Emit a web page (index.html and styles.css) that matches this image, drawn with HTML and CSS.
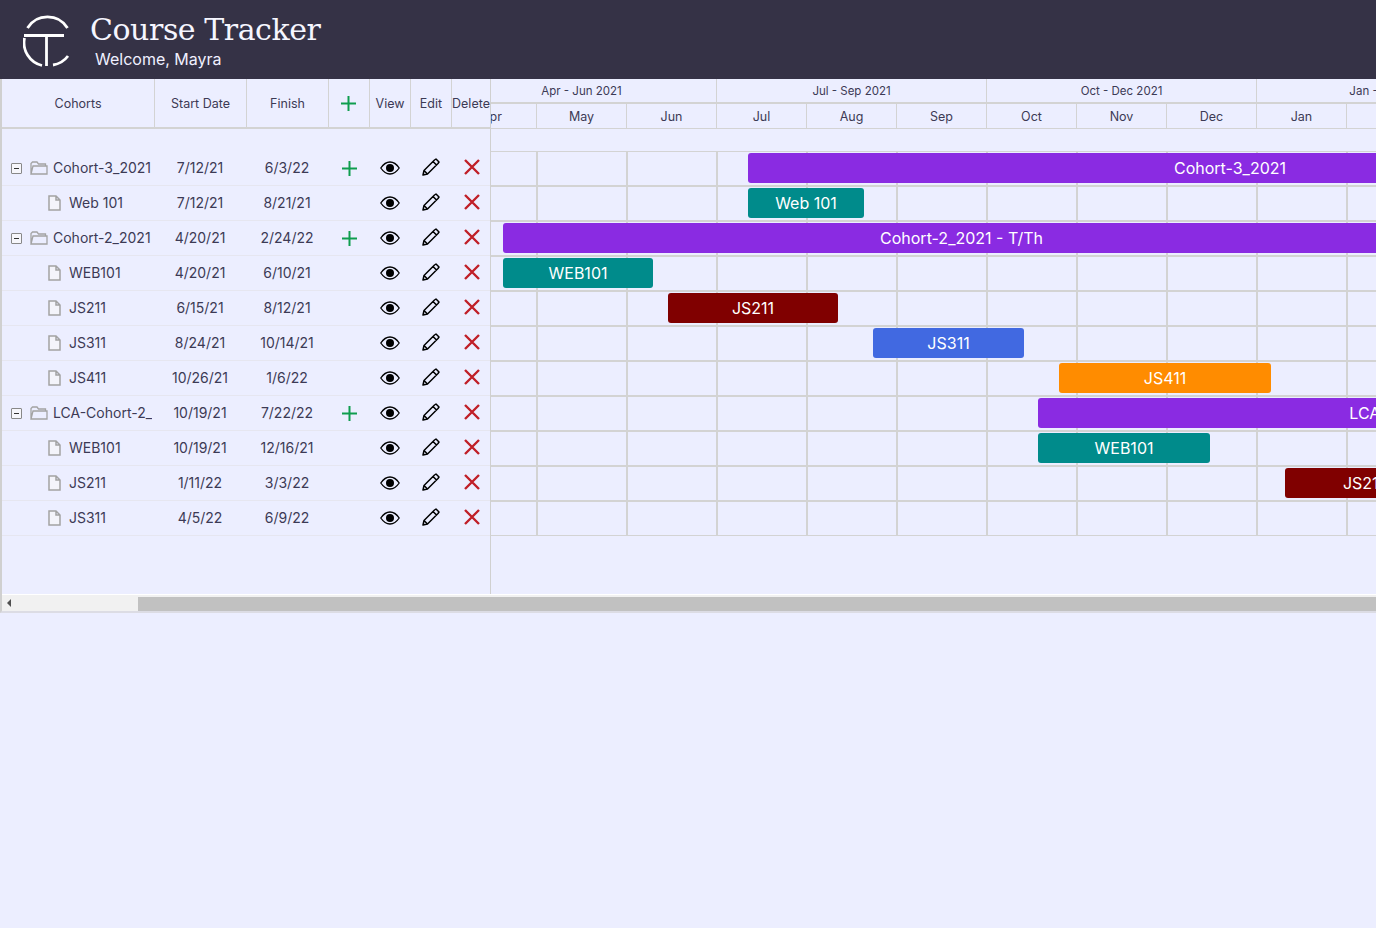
FILE: index.html

```html
<!DOCTYPE HTML>
<html>
<head>
<meta charset="utf-8">
<title>Course Tracker</title>
<link rel="stylesheet" href="styles.css">
</head>

<body>
<svg class="defs" width="0" height="0">
	<symbol id="i-plus" viewBox="0 0 15 15"><path d="M7.500 0V15M0 7.500H15" fill="none" stroke="#0f9d4f" stroke-width="2"/></symbol>
	<symbol id="i-eye" viewBox="0 0 20 14"><path d="M0.8 7C3.5 3 6.5 1 10 1S16.500 3 19.200 7C16.500 11 13.500 13 10 13S3.500 11 0.800 7Z" fill="none" stroke="#000" stroke-width="1.300"/><circle cx="10" cy="7" r="4" fill="#000"/></symbol>
	<symbol id="i-pen" viewBox="0 0 18 18"><path d="M1 17L2 12.500L12.500 2L14 1L17 4L16 5.500L5.500 16ZM2 12.500L5.500 16M11 3.500L14.500 7" fill="none" stroke="#000" stroke-width="1.500" stroke-linejoin="round"/></symbol>
	<symbol id="i-del" viewBox="0 0 16 16"><path d="M1 1L15 15M15 1L1 15" fill="none" stroke="#c01f28" stroke-width="2.400"/></symbol>
	<symbol id="i-file" viewBox="0 0 13 16"><path d="M1 1H8L12 5V15H1ZM8 1V5H12" fill="#f4f4fa" stroke="#a3a3a3" stroke-width="1.500"/></symbol>
	<symbol id="i-folder" viewBox="0 0 18 14"><path d="M1 13V2.500L2.500 1H7L8.500 3H15.500V5M1 13L3 5H17V13Z" fill="none" stroke="#a3a3a3" stroke-width="1.300"/></symbol>
</svg>

<header class="topbar">
	<svg class="logo" width="50" height="54" viewBox="0 0 50 54">
		<g fill="none" stroke="#fff" stroke-width="2.800">
			<path d="M4.500 13A23.500 23.500 0 0 1 44.500 13"/>
			<path d="M1 20.500H41M23.500 20.500V51"/>
			<path d="M1.500 23A23.500 23.500 0 0 0 19 50.500"/>
			<path d="M30 50A23.500 23.500 0 0 0 45 41"/>
		</g>
	</svg>
	<div class="brand">
		<h1>Course Tracker</h1>
		<p>Welcome, Mayra</p>
	</div>
</header>

<div class="gantt">
	<div class="panes">
		<div class="tree">
			<div class="tree-head">
				<div>Cohorts</div>
				<div>Start Date</div>
				<div>Finish</div>
				<div><svg class="ico-plus"><use href="#i-plus"/></svg></div>
				<div>View</div>
				<div>Edit</div>
				<div>Delete</div>
			</div>
			<div class="tree-rows">
				<div class="row">
					<div class="name"><span class="toggle"></span><svg class="ico-folder"><use href="#i-folder"/></svg><span class="label">Cohort-3_2021</span></div>
					<div>7/12/21</div><div>6/3/22</div>
					<div><svg class="ico-plus"><use href="#i-plus"/></svg></div>
					<div><svg class="ico-eye"><use href="#i-eye"/></svg></div>
					<div><svg class="ico-pen"><use href="#i-pen"/></svg></div>
					<div><svg class="ico-del"><use href="#i-del"/></svg></div>
				</div>
				<div class="row">
					<div class="name leaf"><svg class="ico-file"><use href="#i-file"/></svg><span class="label">Web 101</span></div>
					<div>7/12/21</div><div>8/21/21</div>
					<div></div>
					<div><svg class="ico-eye"><use href="#i-eye"/></svg></div>
					<div><svg class="ico-pen"><use href="#i-pen"/></svg></div>
					<div><svg class="ico-del"><use href="#i-del"/></svg></div>
				</div>
				<div class="row">
					<div class="name"><span class="toggle"></span><svg class="ico-folder"><use href="#i-folder"/></svg><span class="label">Cohort-2_2021</span></div>
					<div>4/20/21</div><div>2/24/22</div>
					<div><svg class="ico-plus"><use href="#i-plus"/></svg></div>
					<div><svg class="ico-eye"><use href="#i-eye"/></svg></div>
					<div><svg class="ico-pen"><use href="#i-pen"/></svg></div>
					<div><svg class="ico-del"><use href="#i-del"/></svg></div>
				</div>
				<div class="row">
					<div class="name leaf"><svg class="ico-file"><use href="#i-file"/></svg><span class="label">WEB101</span></div>
					<div>4/20/21</div><div>6/10/21</div>
					<div></div>
					<div><svg class="ico-eye"><use href="#i-eye"/></svg></div>
					<div><svg class="ico-pen"><use href="#i-pen"/></svg></div>
					<div><svg class="ico-del"><use href="#i-del"/></svg></div>
				</div>
				<div class="row">
					<div class="name leaf"><svg class="ico-file"><use href="#i-file"/></svg><span class="label">JS211</span></div>
					<div>6/15/21</div><div>8/12/21</div>
					<div></div>
					<div><svg class="ico-eye"><use href="#i-eye"/></svg></div>
					<div><svg class="ico-pen"><use href="#i-pen"/></svg></div>
					<div><svg class="ico-del"><use href="#i-del"/></svg></div>
				</div>
				<div class="row">
					<div class="name leaf"><svg class="ico-file"><use href="#i-file"/></svg><span class="label">JS311</span></div>
					<div>8/24/21</div><div>10/14/21</div>
					<div></div>
					<div><svg class="ico-eye"><use href="#i-eye"/></svg></div>
					<div><svg class="ico-pen"><use href="#i-pen"/></svg></div>
					<div><svg class="ico-del"><use href="#i-del"/></svg></div>
				</div>
				<div class="row">
					<div class="name leaf"><svg class="ico-file"><use href="#i-file"/></svg><span class="label">JS411</span></div>
					<div>10/26/21</div><div>1/6/22</div>
					<div></div>
					<div><svg class="ico-eye"><use href="#i-eye"/></svg></div>
					<div><svg class="ico-pen"><use href="#i-pen"/></svg></div>
					<div><svg class="ico-del"><use href="#i-del"/></svg></div>
				</div>
				<div class="row">
					<div class="name"><span class="toggle"></span><svg class="ico-folder"><use href="#i-folder"/></svg><span class="label">LCA-Cohort-2_</span></div>
					<div>10/19/21</div><div>7/22/22</div>
					<div><svg class="ico-plus"><use href="#i-plus"/></svg></div>
					<div><svg class="ico-eye"><use href="#i-eye"/></svg></div>
					<div><svg class="ico-pen"><use href="#i-pen"/></svg></div>
					<div><svg class="ico-del"><use href="#i-del"/></svg></div>
				</div>
				<div class="row">
					<div class="name leaf"><svg class="ico-file"><use href="#i-file"/></svg><span class="label">WEB101</span></div>
					<div>10/19/21</div><div>12/16/21</div>
					<div></div>
					<div><svg class="ico-eye"><use href="#i-eye"/></svg></div>
					<div><svg class="ico-pen"><use href="#i-pen"/></svg></div>
					<div><svg class="ico-del"><use href="#i-del"/></svg></div>
				</div>
				<div class="row">
					<div class="name leaf"><svg class="ico-file"><use href="#i-file"/></svg><span class="label">JS211</span></div>
					<div>1/11/22</div><div>3/3/22</div>
					<div></div>
					<div><svg class="ico-eye"><use href="#i-eye"/></svg></div>
					<div><svg class="ico-pen"><use href="#i-pen"/></svg></div>
					<div><svg class="ico-del"><use href="#i-del"/></svg></div>
				</div>
				<div class="row">
					<div class="name leaf"><svg class="ico-file"><use href="#i-file"/></svg><span class="label">JS311</span></div>
					<div>4/5/22</div><div>6/9/22</div>
					<div></div>
					<div><svg class="ico-eye"><use href="#i-eye"/></svg></div>
					<div><svg class="ico-pen"><use href="#i-pen"/></svg></div>
					<div><svg class="ico-del"><use href="#i-del"/></svg></div>
				</div>
			</div>
		</div>

		<div class="chart">
			<div class="chart-inner">
				<div class="quarters">
					<div>Apr - Jun 2021</div>
					<div>Jul - Sep 2021</div>
					<div>Oct - Dec 2021</div>
					<div>Jan - Mar 2022</div>
				</div>
				<div class="months">
					<div>Apr</div><div>May</div><div>Jun</div><div>Jul</div><div>Aug</div><div>Sep</div>
					<div>Oct</div><div>Nov</div><div>Dec</div><div>Jan</div><div>Feb</div><div>Mar</div>
				</div>
				<div class="lanes">
					<div class="lane"><div class="bar purple" style="left:301px;width:964px">Cohort-3_2021</div></div>
					<div class="lane"><div class="bar teal" style="left:301px;width:116px">Web 101</div></div>
					<div class="lane"><div class="bar purple" style="left:56px;width:917px">Cohort-2_2021 - T/Th</div></div>
					<div class="lane"><div class="bar teal" style="left:56px;width:150px">WEB101</div></div>
					<div class="lane"><div class="bar maroon" style="left:221px;width:170px">JS211</div></div>
					<div class="lane"><div class="bar blue" style="left:426px;width:151px">JS311</div></div>
					<div class="lane"><div class="bar orange" style="left:612px;width:212px">JS411</div></div>
					<div class="lane"><div class="bar purple" style="left:591px;width:772px">LCA-Cohort-2_2021</div></div>
					<div class="lane"><div class="bar teal" style="left:591px;width:172px">WEB101</div></div>
					<div class="lane"><div class="bar maroon" style="left:838px;width:158px">JS211</div></div>
					<div class="lane"></div>
				</div>
			</div>
		</div>
	</div>
	<div class="hscroll">
		<div class="hscroll-arrow"></div>
		<div class="hscroll-thumb"></div>
	</div>
</div>
</body>
</html>
```

FILE: styles.css

```css
* {margin:0; padding:0; box-sizing:border-box;}
html, body {height:100%;}
body {background:#eceeff; font-family:"Inter","Liberation Sans",sans-serif; color:#3c3a55; overflow:hidden;}
.defs {position:absolute;}

.topbar {height:79px; background:#353246; color:#fff; display:flex; align-items:flex-start; padding:13px 0 0 23px;}
.logo {flex:none; margin:2px 17px 0 0;}
.brand h1 {font:normal 30px/34px "DejaVu Serif",serif; color:#f6f6ff; letter-spacing:-0.45px;}
.brand p {font-size:16px; line-height:20px; margin:2px 0 0 5px; color:#f0f0ff;}

.gantt {height:534px; border-left:2px solid #d0d0d0; border-bottom:2px solid #dcdce4; display:flex; flex-direction:column;}
.panes {display:flex; height:515px;}

.tree {width:489px; flex:none; border-right:1px solid #d0d0d0; font-size:14px;}
.tree-head, .row {display:grid; grid-template-columns:153px 92px 82px 41px 41px 41px 38px;}
.tree-head {height:50px; border-bottom:2px solid #d3d3d3; font-size:12.500px;}
.tree-head > div {display:flex; align-items:center; justify-content:center; border-right:1px solid #d3d3d3; padding-top:1px;}
.tree-head > div:last-child {border-right:0;}
.tree-rows {padding-top:22px;}
.row {height:35px; border-bottom:1px solid #e6e6f0;}
.row > div {display:flex; align-items:center; justify-content:center;}
.row > div:nth-child(2), .row > div:nth-child(3) {padding:0 2px 1px 0;}
.row .name {justify-content:flex-start; padding:0 1px 0 9px; white-space:nowrap; min-width:0;}
.row .name.leaf {padding-left:46px;}
.label {margin:0 0 1px 5px; overflow:hidden; min-width:0;}
.leaf .label {margin-left:8px;}

.toggle {width:11px; height:11px; flex:none; margin-right:8px; border:1px solid #888; border-radius:1px; background:linear-gradient(#333,#333) center/5px 1px no-repeat #f6f6fb;}
.ico-plus {width:15px; height:15px; margin-right:1px;}
.ico-eye {width:20px; height:14px; margin-right:1px;}
.ico-pen {width:18px; height:18px; margin:0 1px 2px 0;}
.ico-del {width:16px; height:16px; margin:0 0 2px 2px;}
.ico-file {width:13px; height:16px; flex:none;}
.ico-folder {width:18px; height:14px; flex:none;}

.chart {flex:1; overflow:hidden; min-width:0;}
.chart-inner {width:1440px; margin-left:-44px; font-size:12.500px;}
.quarters, .months {display:flex;}
.quarters {height:25px; border-bottom:2px solid #d3d3d3; font-size:11.500px;}
.quarters > div {flex:none; width:270px; text-align:center; line-height:24px; border-right:1px solid #d3d3d3; white-space:nowrap;}
.months {height:25px; border-bottom:1px solid #d3d3d3;}
.months > div {flex:none; width:90px; text-align:center; line-height:26px; border-right:1px solid #d3d3d3;}

.lanes {margin-top:22px; border-top:1px solid #d3d3d3;}
.lane {position:relative; height:35px; border-bottom:2px solid #d3d3d3; background:linear-gradient(90deg,#d3d3d3 1px,transparent 1px,transparent 89px,#d3d3d3 89px) 0 0/90px 100%;}
.lane:last-child {height:34px; border-bottom-width:1px;}
.bar {position:absolute; top:1px; height:30px; border-radius:3px; color:#fff; font-size:16px; line-height:30px; text-align:center; white-space:nowrap;}
.purple {background:#8a2be2;}
.teal {background:#008b8b;}
.maroon {background:#800000;}
.blue {background:#4169e1;}
.orange {background:#ff8c00;}

.hscroll {height:17px; background:#f1f1f1; display:flex; border-top:1px solid #fff; padding-top:2px;}
.hscroll-arrow {width:0; height:0; align-self:center; margin:-2px 0 0 5px; border:4px solid transparent; border-left:0; border-right:4px solid #505050;}
.hscroll-thumb {margin-left:127px; flex:1; background:#c1c1c1;}
```
